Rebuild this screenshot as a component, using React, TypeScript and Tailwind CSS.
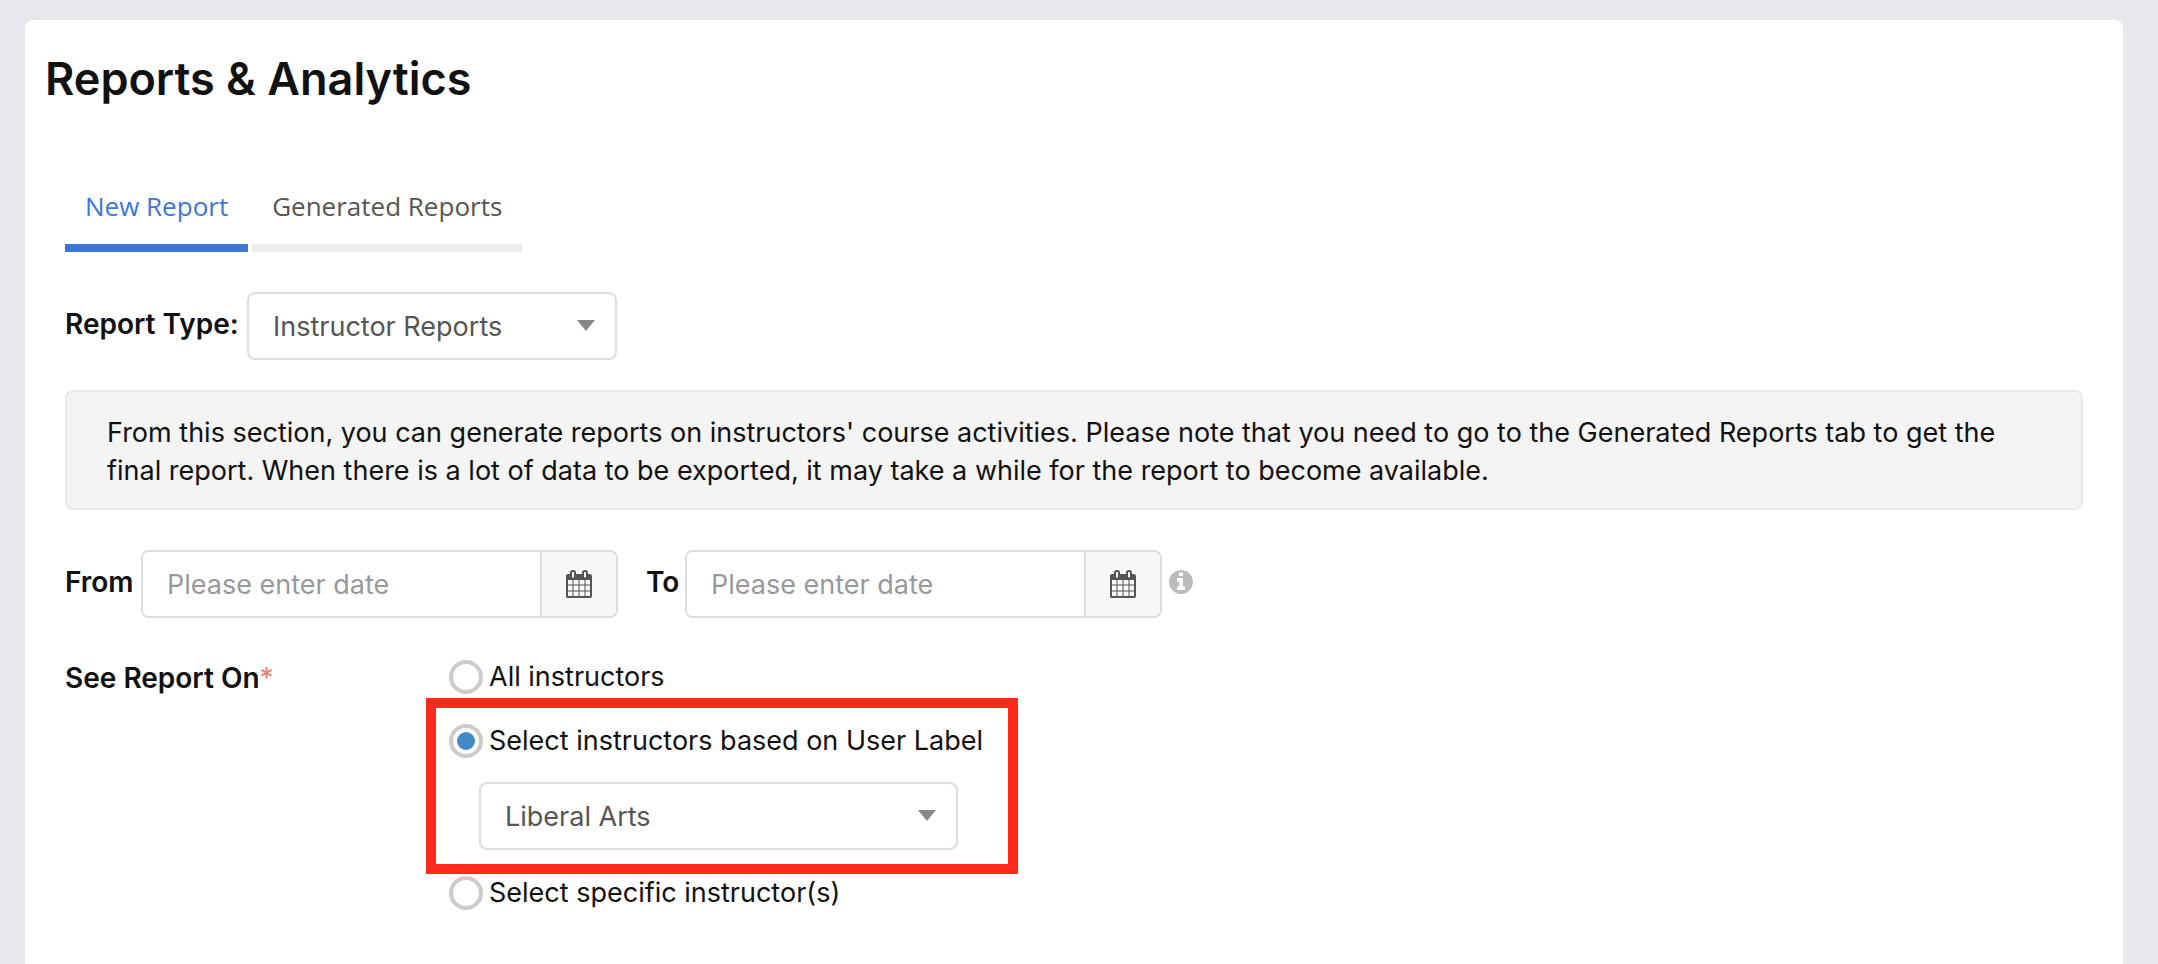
import { useState } from 'react';

type SelectFieldProps = {
  id: string;
  label: string;
  options: string[];
  className: string;
  hideLabel?: boolean;
};

function SelectField({ id, label, options, className, hideLabel }: SelectFieldProps) {
  return (
    <>
      <label htmlFor={id} className={hideLabel ? 'sr-only' : 'min-w-[174px] pb-1 text-[28px] font-semibold'}>
        {label}
      </label>
      <div className={`relative ${className}`}>
        <select
          id={id}
          className="h-[68px] w-full appearance-none rounded-lg border-2 border-[#ddd] bg-white pl-6 pr-16 pt-0.5 text-[#555]"
        >
          {options.map((option) => (
            <option key={option}>{option}</option>
          ))}
        </select>
        <svg
          viewBox="0 0 18 11"
          className="pointer-events-none absolute right-[22px] top-7 h-[11px] w-[18px] fill-[#888]"
          aria-hidden="true"
        >
          <path d="M0 0h18L9 11z" />
        </svg>
      </div>
    </>
  );
}

function CalendarIcon() {
  return (
    <svg viewBox="64 0 1664 1792" className="h-7 w-[26px] fill-[#555]" aria-hidden="true">
      <path d="M192 1664h288v-288h-288v288zm352 0h320v-288h-320v288zm-352-352h288v-320h-288v320zm352 0h320v-320h-320v320zm-352-384h288v-288h-288v288zm736 736h320v-288h-320v288zm-384-736h320v-288h-320v288zm768 736h288v-288h-288v288zm-384-352h320v-320h-320v320zm-352-864v-288q0-13-9.5-22.5t-22.5-9.5h-64q-13 0-22.5 9.5t-9.5 22.5v288q0 13 9.5 22.5t22.5 9.5h64q13 0 22.5-9.5t9.5-22.5zm736 864h288v-320h-288v320zm-384-384h320v-288h-320v288zm384 0h288v-288h-288v288zm32-480v-288q0-13-9.5-22.5t-22.5-9.5h-64q-13 0-22.5 9.5t-9.5 22.5v288q0 13 9.5 22.5t22.5 9.5h64q13 0 22.5-9.5t9.5-22.5zm384-64v1280q0 52-38 90t-90 38h-1408q-52 0-90-38t-38-90v-1280q0-52 38-90t90-38h128v-96q0-66 47-113t113-47h64q66 0 113 47t47 113v96h384v-96q0-66 47-113t113-47h64q66 0 113 47t47 113v96h128q52 0 90 38t38 90z" />
    </svg>
  );
}

function InfoIcon() {
  return (
    <svg viewBox="128 128 1536 1536" className="size-6 fill-[#bbb]" aria-hidden="true">
      <path d="M1152 1376v-160q0-14-9-23t-23-9h-96v-512q0-14-9-23t-23-9h-320q-14 0-23 9t-9 23v160q0 14 9 23t23 9h96v320h-96q-14 0-23 9t-9 23v160q0 14 9 23t23 9h448q14 0 23-9t9-23zm-128-896v-160q0-14-9-23t-23-9h-192q-14 0-23 9t-9 23v160q0 14 9 23t23 9h192q14 0 23-9t9-23zm640 416q0 209-103 385.5t-279.5 279.5-385.5 103-385.5-103-279.5-279.5-103-385.5 103-385.5 279.5-279.5 385.5-103 385.5 103 279.5 279.5 103 385.5z" />
    </svg>
  );
}

function DateField({ id, label, className }: { id: string; label: string; className: string }) {
  return (
    <div className="flex items-center">
      <label htmlFor={id} className={`pb-1 text-[28px] font-semibold ${className}`}>
        {label}
      </label>
      <div className="flex h-[68px] w-[477px] rounded-lg border-2 border-[#ddd]">
        <input
          id={id}
          type="text"
          placeholder="Please enter date"
          className="min-w-0 flex-1 rounded-l-md bg-white pl-6 pr-2 pt-0.5 text-[#555] outline-none placeholder:text-[#999]"
        />
        <button
          type="button"
          aria-label={`Open ${label} calendar`}
          className="flex w-[76px] items-center justify-center rounded-r-md border-l-2 border-[#ddd] bg-[#f7f7f7]"
        >
          <CalendarIcon />
        </button>
      </div>
    </div>
  );
}

type RadioOptionProps = {
  label: string;
  checked: boolean;
  onSelect: () => void;
};

function RadioOption({ label, checked, onSelect }: RadioOptionProps) {
  return (
    <label className="flex h-[34px] w-fit items-center gap-1.5">
      <input
        type="radio"
        name="scope"
        checked={checked}
        onChange={onSelect}
        className="grid size-[34px] shrink-0 appearance-none place-content-center rounded-full border-4 border-[#ccc] bg-white before:size-[18px] before:rounded-full checked:before:bg-[#428bca]"
      />
      <span>{label}</span>
    </label>
  );
}

export default function App() {
  const [tab, setTab] = useState('New Report');
  const [scope, setScope] = useState('label');

  return (
    <div className="min-h-screen bg-[#e7e8ec] pl-[25px] pr-[35px] pt-5 font-['Inter',sans-serif] text-[27px] leading-[38px] text-[#111]">
      <main className="min-h-[calc(100vh-20px)] rounded-t-lg bg-white px-10 pb-12">
        <h1 className="-ml-5 pt-7 text-[45px] font-semibold leading-[62px]">Reports &amp; Analytics</h1>

        <div role="tablist" className="mt-[62px] flex gap-1 font-['Open_Sans',sans-serif] text-[26px]">
          {['New Report', 'Generated Reports'].map((name) => (
            <button
              key={name}
              type="button"
              role="tab"
              aria-selected={tab === name}
              onClick={() => setTab(name)}
              className={`h-20 border-b-8 px-5 pb-1 ${
                tab === name ? 'border-[#3a77d9] text-[#3a77d9]' : 'border-[#ececec] text-[#555]'
              }`}
            >
              {name}
            </button>
          ))}
        </div>

        <div className="mt-10 flex items-center gap-2">
          <SelectField
            id="report-type"
            label="Report Type:"
            options={['Instructor Reports', 'Learner Reports', 'Course Reports']}
            className="w-[370px]"
          />
        </div>

        <p className="mt-[30px] rounded-lg border-2 border-[#e8e8e8] bg-[#f4f4f4] px-10 pb-[18px] pt-[22px]">
          From this section, you can generate reports on instructors' course activities. Please note that you need to
          go to the Generated Reports tab to get the final report. When there is a lot of data to be exported, it may
          take a while for the report to become available.
        </p>

        <div className="mt-10 flex flex-wrap items-center">
          <DateField id="date-from" label="From" className="w-[76px]" />
          <div className="ml-7">
            <DateField id="date-to" label="To" className="w-[39px]" />
          </div>
          <button type="button" aria-label="Date range help" className="ml-[7px] pb-1">
            <InfoIcon />
          </button>
        </div>

        <fieldset className="mt-[42px] flex items-start" aria-labelledby="scope-heading">
          <div id="scope-heading" className="w-96 shrink-0 text-[28px] font-semibold leading-[36px]">
            See Report On<span className="font-normal text-[#f47c6c]">*</span>
          </div>
          <div>
            <RadioOption label="All instructors" checked={scope === 'all'} onSelect={() => setScope('all')} />
            <div className="-ml-[23px] mb-0.5 mt-1 w-[592px] border-10 border-[#ff2a1c] px-[13px] pb-[14px] pt-4">
              <RadioOption
                label="Select instructors based on User Label"
                checked={scope === 'label'}
                onSelect={() => setScope('label')}
              />
              <div className="ml-[30px] mt-6">
                <SelectField
                  id="user-label"
                  label="User Label"
                  options={['Liberal Arts', 'Sciences', 'Engineering']}
                  className="w-[479px]"
                  hideLabel
                />
              </div>
            </div>
            <RadioOption
              label="Select specific instructor(s)"
              checked={scope === 'specific'}
              onSelect={() => setScope('specific')}
            />
          </div>
        </fieldset>
      </main>
    </div>
  );
}
